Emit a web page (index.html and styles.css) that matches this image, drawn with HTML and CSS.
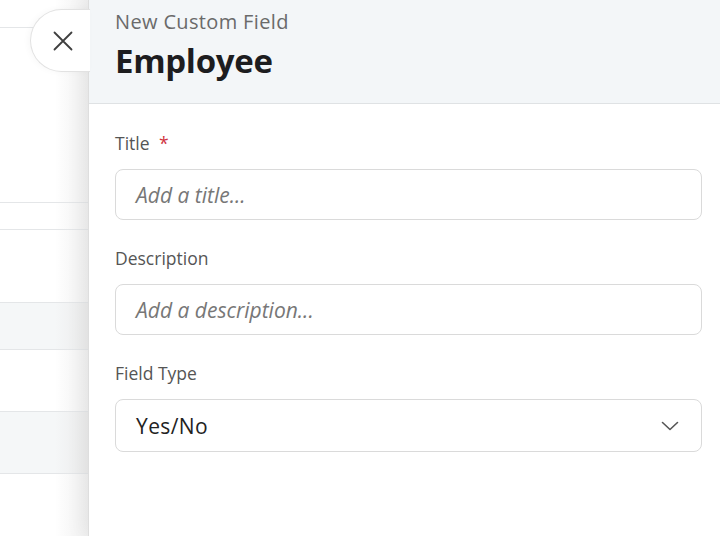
FILE: index.html
```html
<!DOCTYPE html>
<html>
<head>
<meta charset="utf-8">
<link rel="stylesheet" href="styles.css">
</head>
<body>
<div class="page">
  <div class="backdrop">
    <div class="bg-row h28"></div>
    <div class="bg-row h175"></div>
    <div class="bg-row h27"></div>
    <div class="bg-row h73"></div>
    <div class="bg-row h47 band"></div>
    <div class="bg-row h62"></div>
    <div class="bg-row h62 band"></div>
  </div>
  <button class="close" aria-label="Close">
    <svg width="20" height="20" viewBox="0 0 20 20"><path d="M1.5 1.5 L18.5 18.5 M18.5 1.5 L1.5 18.5" stroke="#3f3f3f" stroke-width="1.8" stroke-linecap="round" fill="none"/></svg>
  </button>
  <aside class="panel">
    <header class="panel-head">
      <div class="subtitle">New Custom Field</div>
      <h1 class="title">Employee</h1>
    </header>
    <form class="panel-body">
      <div class="field">
        <label class="label">Title <span class="req">*</span></label>
        <div class="input placeholder">Add a title...</div>
      </div>
      <div class="field">
        <label class="label">Description</label>
        <div class="input placeholder">Add a description...</div>
      </div>
      <div class="field">
        <label class="label">Field Type</label>
        <div class="input select">
          <span class="value">Yes/No</span>
          <svg width="18" height="10" viewBox="0 0 18 10"><path d="M1.5 1.5 L9 8.5 L16.5 1.5" stroke="#555" stroke-width="1.6" fill="none" stroke-linecap="round" stroke-linejoin="round"/></svg>
        </div>
      </div>
    </form>
  </aside>
</div>
</body>
</html>
```
FILE: styles.css
```css
html, body {
  margin: 0;
  padding: 0;
  background: #fff;
}
body {
  font-family: "Open Sans", "Liberation Sans", sans-serif;
  width: 720px;
  height: 536px;
  overflow: hidden;
}
.page {
  position: relative;
  display: flex;
  width: 720px;
  height: 536px;
}
.backdrop {
  width: 88px;
  flex: none;
  display: flex;
  flex-direction: column;
  background: linear-gradient(to right, #fff 0, #fff 55px, #f0f0f0 88px);
}
.bg-row {
  box-sizing: border-box;
  border-bottom: 1px solid #e4e6e8;
  flex: none;
}
.h28 { height: 28px; }
.h27 { height: 27px; }
.h175 { height: 175px; }
.h73 { height: 73px; }
.h47 { height: 47px; }
.h62 { height: 62px; }
.band { background: linear-gradient(to right, #f5f7f8 0, #f5f7f8 55px, #ebebeb 88px); }
.close {
  position: absolute;
  left: 30px;
  top: 9px;
  width: 60px;
  height: 63px;
  border: 1px solid #e2e2e2;
  border-right: none;
  border-radius: 32px 0 0 32px;
  background: #fff;
  display: flex;
  align-items: center;
  justify-content: center;
  padding: 0 0 0 4px;
  z-index: 2;
  box-shadow: -2px 0 6px rgba(0,0,0,0.03);
}
.panel {
  flex: 1;
  border-left: 1px solid #dedede;
  background: #fff;
  box-shadow: -6px 0 18px rgba(0,0,0,0.05);
  display: flex;
  flex-direction: column;
}
.panel-head {
  background: #f3f6f8;
  border-bottom: 1px solid #dfe2e4;
  height: 104px;
  box-sizing: border-box;
  padding: 9px 0 0 26px;
}
.subtitle {
  font-size: 20px;
  color: #6a6a6a;
  line-height: 26px;
  letter-spacing: 0.35px;
}
.title {
  margin: 0;
  font-size: 33px;
  font-weight: 700;
  color: #1d1d1f;
  line-height: 52px;
  letter-spacing: -0.3px;
}
.panel-body {
  padding: 27px 18px 0 26px;
  display: flex;
  flex-direction: column;
  gap: 26px;
}
.field {
  display: flex;
  flex-direction: column;
  gap: 14px;
}
.label {
  font-size: 17.5px;
  color: #555;
  line-height: 24px;
}
.req {
  color: #d0353f;
  margin-left: 5px;
}
.input {
  height: 51px;
  flex: none;
  box-sizing: border-box;
  border: 1px solid #dadada;
  border-radius: 8px;
  padding: 0 20px;
  display: flex;
  align-items: center;
  font-size: 21px;
}
.placeholder {
  font-style: italic;
  color: #777;
}
.select {
  height: 53px;
  justify-content: space-between;
  color: #222;
  padding-right: 22px;
  letter-spacing: 0.4px;
}
```
